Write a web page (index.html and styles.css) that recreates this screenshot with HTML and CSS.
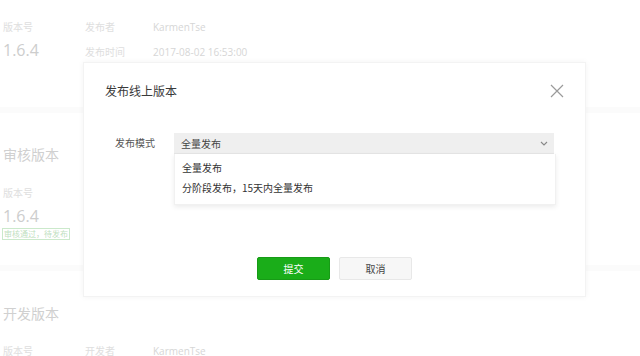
FILE: index.html
```html
<!DOCTYPE html>
<html lang="zh-CN">
<head>
<meta charset="utf-8">
<title>发布线上版本</title>
<link rel="stylesheet" href="styles.css">
</head>
<body>
<div class="page">
  <section class="sec sec-online">
    <div class="ver-col">
      <div class="lbl">版本号</div>
      <div class="ver">1.6.4</div>
    </div>
    <div class="meta">
      <div class="lbl">发布者</div><div class="val">KarmenTse</div>
      <div class="lbl">发布时间</div><div class="val">2017-08-02 16:53:00</div>
    </div>
  </section>
  <div class="band"></div>
  <section class="sec sec-review">
    <div class="ver-col">
      <div class="title">审核版本</div>
      <div class="lbl lbl-gap">版本号</div>
      <div class="ver">1.6.4</div>
      <div class="tag">审核通过，待发布</div>
    </div>
  </section>
  <div class="band"></div>
  <section class="sec sec-dev">
    <div class="title">开发版本</div>
    <div class="dev-row">
      <div class="lbl c1">版本号</div>
      <div class="lbl c2">开发者</div>
      <div class="val">KarmenTse</div>
    </div>
  </section>
</div>

<div class="modal">
  <div class="modal-head">
    <div class="modal-title">发布线上版本</div>
    <svg class="close" width="14" height="14" viewBox="0 0 14 14"><path d="M1 1L13 13M13 1L1 13" stroke="#9a9a9a" stroke-width="1.2" fill="none"/></svg>
  </div>
  <div class="form-row">
    <div class="form-label">发布模式</div>
    <div class="select-wrap">
      <div class="select">
        <span>全量发布</span>
        <svg class="chev" width="8" height="5" viewBox="0 0 8 5"><path d="M1 1L4 4L7 1" stroke="#888" stroke-width="1.1" fill="none"/></svg>
      </div>
      <ul class="dropdown">
        <li>全量发布</li>
        <li>分阶段发布，15天内全量发布</li>
      </ul>
    </div>
  </div>
  <div class="actions">
    <button class="btn btn-primary">提交</button>
    <button class="btn btn-default">取消</button>
  </div>
</div>
</body>
</html>
```
FILE: styles.css
```css
html, body {
  margin: 0;
  padding: 0;
  width: 640px;
  height: 356px;
  overflow: hidden;
  background: #fff;
  font-family: "Open Sans", "Noto Sans CJK SC", sans-serif;
}

.page {
  display: flex;
  flex-direction: column;
  padding-left: 3px;
}

.sec {
  display: flex;
}

.sec-online {
  padding-top: 17px;
  height: 90px;
}

.ver-col {
  width: 82px;
  display: flex;
  flex-direction: column;
}

.lbl {
  font-size: 10px;
  line-height: 20px;
  color: #dedede;
}

.val {
  font-size: 10px;
  line-height: 20px;
  color: #d6d6d6;
}

.ver {
  font-size: 16px;
  line-height: 22px;
  color: #cdcdcd;
  margin-top: 2px;
}

.meta {
  display: grid;
  grid-template-columns: 68px auto;
  grid-auto-rows: 20px;
  row-gap: 5px;
}

.band {
  height: 6px;
  margin-left: -3px;
  background: #fbfbfb;
}

.sec-review {
  padding-top: 32px;
  height: 120px;
}

.title {
  font-size: 14px;
  line-height: 20px;
  color: #d0d0d0;
}

.lbl-gap {
  margin-top: 18px;
}

.tag {
  align-self: flex-start;
  margin-top: 1px;
  font-size: 8px;
  line-height: 10px;
  padding: 0 1px;
  color: #bfe0bf;
  border: 1px solid #cbe9cb;
  margin-left: -1px;
}

.sec-dev {
  flex-direction: column;
  padding-top: 33px;
}

.dev-row {
  display: flex;
  margin-top: 17px;
}

.c1 { width: 82px; }
.c2 { width: 68px; }

/* Modal over the page */
.modal {
  position: absolute;
  left: 83px;
  top: 62px;
  width: 503px;
  height: 235px;
  background: #fff;
  box-shadow: 0 0 6px rgba(0, 0, 0, 0.05);
  border: 1px solid #f3f3f3;
  box-sizing: border-box;
  display: flex;
  flex-direction: column;
}

.modal-head {
  display: flex;
  align-items: center;
  justify-content: space-between;
  padding: 17px 21px 0 21px;
  height: 20px;
}

.modal-title {
  font-family: "Noto Sans CJK SC", sans-serif;
  font-size: 12px;
  line-height: 20px;
  color: #3a3a3a;
  margin-top: 2px;
}

.close {
  display: block;
  margin-top: 1px;
}

.form-row {
  display: flex;
  align-items: flex-start;
  margin-top: 33px;
  padding-left: 31px;
}

.form-label {
  width: 59px;
  font-family: "Noto Sans CJK SC", sans-serif;
  font-size: 10px;
  line-height: 20px;
  color: #555;
}

.select-wrap {
  position: relative;
  width: 380px;
}

.select {
  height: 21px;
  background: #efefef;
  border-bottom: 1px solid #e6e6e6;
  box-sizing: border-box;
  display: flex;
  align-items: center;
  justify-content: space-between;
  padding: 0 6px 0 7px;
  font-family: "Noto Sans CJK SC", sans-serif;
  font-size: 10px;
  color: #444;
}

.chev { display: block; }

.dropdown {
  position: absolute;
  left: 0;
  top: 21px;
  width: 382px;
  margin: 0;
  padding: 4px 0 6px 0;
  list-style: none;
  background: #fff;
  box-shadow: 0 2px 5px rgba(0, 0, 0, 0.08);
  border: 1px solid #f1f1f1;
  border-top: none;
  box-sizing: border-box;
}

.dropdown li {
  font-family: "Noto Sans CJK SC", sans-serif;
  font-size: 10px;
  line-height: 20px;
  color: #333;
  padding-left: 7px;
}

.actions {
  display: flex;
  gap: 9px;
  margin-top: 103px;
  padding-left: 173px;
}

.btn {
  width: 73px;
  height: 23px;
  font-family: "Noto Sans CJK SC", sans-serif;
  font-size: 10px;
  border-radius: 2px;
  padding: 0;
  cursor: pointer;
}

.btn-primary {
  background: #1aad19;
  border: 1px solid #179b16;
  color: #fff;
}

.btn-default {
  background: #f7f7f7;
  border: 1px solid #e8e8e8;
  color: #444;
}
```
